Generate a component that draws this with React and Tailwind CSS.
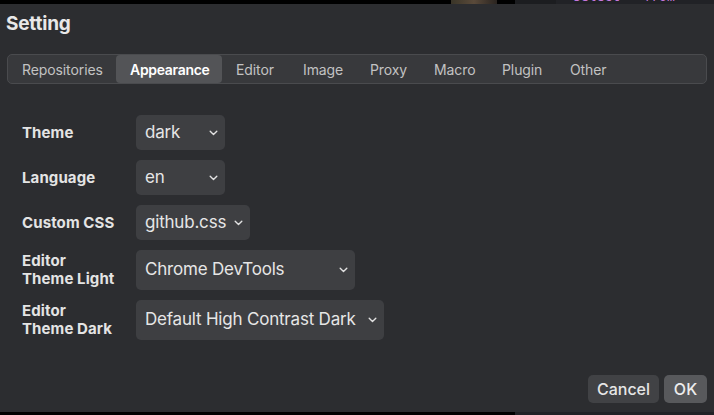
import React from "react";

const font = { fontFamily: 'Inter, "Noto Sans", sans-serif' };

function Chevron() {
  return (
    <svg width="9" height="6" viewBox="0 0 9 6" fill="none" className="shrink-0">
      <path d="M1.2 1.3 L4.5 4.5 L7.8 1.3" stroke="#e2e2e2" strokeWidth="1.4" strokeLinecap="round" strokeLinejoin="round" />
    </svg>
  );
}

function Select({ value, w, h }) {
  return (
    <div className={`flex items-center justify-between rounded-[5px] bg-[#3e3f42] pl-[9px] pr-[7px] ${w} ${h}`}>
      <span className="text-[17px] text-[#e6e6e6] whitespace-nowrap tracking-[-0.2px]">{value}</span>
      <Chevron />
    </div>
  );
}

const tabs = [
  ["Repositories", "w-[108px]"],
  ["Appearance", "w-[106px]"],
  ["Editor", "w-[67px]"],
  ["Image", "w-[67px]"],
  ["Proxy", "w-[64px]"],
  ["Macro", "w-[68px]"],
  ["Plugin", "w-[68px]"],
  ["Other", "w-[60px]"],
];

const rows = [
  [["Theme"], "dark", "w-[89px]", "h-[35px]"],
  [["Language"], "en", "w-[89px]", "h-[35px]"],
  [["Custom CSS"], "github.css", "w-[114px]", "h-[35px]"],
  [["Editor", "Theme Light"], "Chrome DevTools", "w-[219px]", "h-[40px]"],
  [["Editor", "Theme Dark"], "Default High Contrast Dark", "w-[248px]", "h-[40px]"],
];

export default function App() {
  return (
    <div className="w-[714px] h-[415px] bg-black overflow-hidden flex flex-col" style={font}>
      {/* background strip above dialog */}
      <div className="h-[4px] flex shrink-0">
        <div className="w-[451px] bg-black" />
        <div className="w-[46px] bg-gradient-to-r from-[#3a3528] via-[#5a4a3a] to-[#2a2420]" />
        <div className="w-[18px] bg-black" />
        <div className="w-[41px] bg-[#1c1d20]" />
        <div className="flex-1 bg-[#212226] overflow-hidden">
          <div className="ml-[17px] -mt-[10px] text-[13px] leading-[13px] text-[#c678dd] whitespace-pre" style={{ fontFamily: '"DejaVu Sans Mono", monospace' }}>
            select * from
          </div>
        </div>
      </div>

      {/* dialog */}
      <div className="h-[408px] shrink-0 bg-[#2c2d30] flex flex-col">
        <div className="pl-[6px] pt-[8px] h-[50px] text-[19px] leading-[24px] font-bold text-[#e8e8e8] tracking-[-0.2px]">
          Setting
        </div>

        <div className="ml-[7px] w-[700px] h-[30px] rounded-[5px] border border-[#4a4b4e] bg-[#38393c] flex items-center">
          {tabs.map(([t, w]) => (
            <div
              key={t}
              className={`${w} h-[28px] pl-[14px] flex items-center rounded-[4px] text-[14px] whitespace-nowrap ${
                t === "Appearance" ? "bg-[#535457] text-white font-semibold tracking-[-0.3px]" : "text-[#c2c2c2] tracking-[-0.1px]"
              }`}
            >
              {t}
            </div>
          ))}
        </div>

        <div className="mt-[31px] pl-[22px] flex flex-col gap-[10px]">
          {rows.map(([label, value, w, h]) => (
            <div key={value} className="flex items-center">
              <div className="w-[114px] text-[15px] leading-[18px] font-bold text-[#e4e4e4] tracking-[0.1px]">
                {label.map((l) => (
                  <div key={l}>{l}</div>
                ))}
              </div>
              <Select value={value} w={w} h={h} />
            </div>
          ))}
        </div>

        <div className="flex-1" />
        <div className="flex justify-end gap-[5px] pr-[7px] pb-[9px]">
          <div className="w-[71px] h-[28px] rounded-[5px] bg-[#414245] flex items-center justify-center text-[16px] font-medium text-[#e6e6e6]">
            Cancel
          </div>
          <div className="w-[43px] h-[28px] rounded-[5px] bg-[#58595c] flex items-center justify-center text-[16px] font-medium text-[#ececec]">
            OK
          </div>
        </div>
      </div>

      {/* background strip below dialog */}
      <div className="flex-1 flex">
        <div className="w-[515px] bg-black" />
        <div className="flex-1 bg-[#212226]" />
      </div>
    </div>
  );
}
